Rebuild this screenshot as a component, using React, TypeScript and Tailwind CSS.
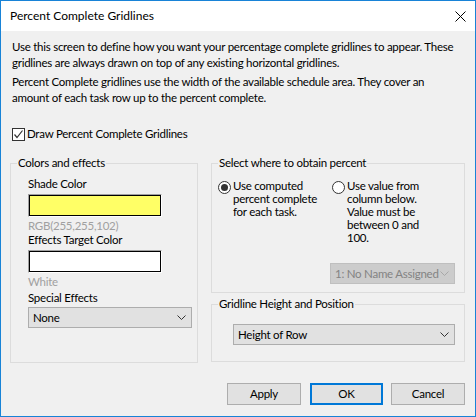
import React from 'react';

function Chevron({ color = '#333' }: { color?: string }) {
  return (
    <svg width="9" height="5" viewBox="0 0 9 5" className="shrink-0">
      <path d="M0.5 0.5 L4.5 4.5 L8.5 0.5" fill="none" stroke={color} strokeWidth="1" />
    </svg>
  );
}

function Combo({ value, className, disabled }: { value: string; className: string; disabled?: boolean }) {
  return (
    <div
      className={`flex items-center justify-between pl-[4px] pr-[5px] border whitespace-nowrap ${
        disabled ? 'bg-[#cccccc] border-[#bfbfbf] text-[#838383]' : 'bg-[#e1e1e1] border-[#adadad] text-black'
      } ${className}`}
    >
      <span>{value}</span>
      <Chevron color={disabled ? '#a8a8a8' : '#333'} />
    </div>
  );
}

function ColorBox({ color }: { color: string }) {
  return (
    <div className="w-[134px] h-[23px] border border-t-[#a0a0a0] border-l-[#a0a0a0] border-b-white border-r-white">
      <div className="w-full h-full border border-black" style={{ backgroundColor: color }} />
    </div>
  );
}

function Radio({ checked }: { checked?: boolean }) {
  return (
    <span className="mt-[2px] w-[13px] h-[13px] shrink-0 rounded-full border border-[#333] bg-white flex items-center justify-center">
      {checked && <span className="w-[7px] h-[7px] rounded-full bg-[#333]" />}
    </span>
  );
}

function Button({ label, primary, className }: { label: string; primary?: boolean; className: string }) {
  return (
    <button
      className={`h-[22px] bg-[#e1e1e1] flex items-center justify-center ${
        primary ? 'border-2 border-[#0078d7]' : 'border border-[#adadad]'
      } ${className}`}
    >
      {label}
    </button>
  );
}

export default function App() {
  return (
    <div className="w-[476px] h-[417px] overflow-hidden border border-[#1883d7] bg-[#f0f0f0] flex flex-col text-[11.5px] tracking-[-0.25px] leading-[16px] text-black font-['Lato',sans-serif] whitespace-nowrap">
      {/* title bar */}
      <div className="h-[30px] shrink-0 bg-white flex items-center justify-between pl-[9px] pr-[9px]">
        <span className="text-[12px] tracking-normal">Percent Complete Gridlines</span>
        <svg width="11" height="11" viewBox="0 0 11 11">
          <path d="M0.5 0.5 L10.5 10.5 M10.5 0.5 L0.5 10.5" stroke="#000" strokeWidth="1" />
        </svg>
      </div>

      <div className="flex flex-col pl-[11px] pt-[8px]">
        <p>
          Use this screen to define how you want your percentage complete gridlines to appear. These
          <br />
          gridlines are always drawn on top of any existing horizontal gridlines.
        </p>
        <p className="mt-[3px]">
          Percent Complete gridlines use the width of the available schedule area. They cover an
          <br />
          amount of each task row up to the percent complete.
        </p>

        <label className="mt-[20px] flex items-center">
          <span className="w-[13px] h-[13px] border border-[#333] bg-white flex items-center justify-center">
            <svg width="11" height="11" viewBox="0 0 11 11">
              <path d="M1.5 5.5 L4 8.5 L9.5 1.5" fill="none" stroke="#333" strokeWidth="1.2" />
            </svg>
          </span>
          <span className="ml-[2px]">Draw Percent Complete Gridlines</span>
        </label>

        <div className="-ml-[2px] mt-[14px] flex gap-[13px] leading-[14px]">
          {/* Colors and effects */}
          <fieldset className="w-[188px] h-[207px] border border-[#dcdcdc]">
            <legend className="ml-[6px] px-[1px]">Colors and effects</legend>
            <div className="pl-[17px] pt-[7px] flex flex-col">
              <span>Shade Color</span>
              <div className="mt-[3px]">
                <ColorBox color="#ffff66" />
              </div>
              <span className="mt-[2px] text-[#a0a0a0]">RGB(255,255,102)</span>
              <span>Effects Target Color</span>
              <div className="mt-[3px]">
                <ColorBox color="#ffffff" />
              </div>
              <span className="mt-[2px] text-[#a0a0a0]">White</span>
              <span className="mt-[2px]">Special Effects</span>
              <Combo value="None" className="mt-[2px] w-[164px] h-[21px]" />
            </div>
          </fieldset>

          <div className="flex flex-col gap-[4px]">
            {/* Select where to obtain percent */}
            <fieldset className="w-[254px] h-[137px] border border-[#dcdcdc]">
              <legend className="ml-[6px] px-[1px]">Select where to obtain percent</legend>
              <div className="pl-[6px] pt-[9px] flex flex-col leading-[13px]">
                <div className="flex">
                  <div className="w-[114px] flex items-start">
                    <Radio checked />
                    <span className="ml-[2px]">
                      Use computed
                      <br />
                      percent complete
                      <br />
                      for each task.
                    </span>
                  </div>
                  <div className="flex items-start">
                    <Radio />
                    <span className="ml-[2px]">
                      Use value from
                      <br />
                      column below.
                      <br />
                      Value must be
                      <br />
                      between 0 and
                      <br />
                      100.
                    </span>
                  </div>
                </div>
                <Combo
                  value="1: No Name Assigned"
                  disabled
                  className="mt-[19px] ml-[112px] w-[125px] h-[21px] leading-[14px]"
                />
              </div>
            </fieldset>

            {/* Gridline Height and Position */}
            <fieldset className="w-[254px] h-[65px] border border-[#dcdcdc]">
              <legend className="ml-[6px] px-[1px]">Gridline Height and Position</legend>
              <div className="pl-[21px] pt-[13px]">
                <Combo value="Height of Row" className="w-[222px] h-[21px]" />
              </div>
            </fieldset>
          </div>
        </div>

        <div className="mt-[20px] flex">
          <Button label="Apply" className="ml-[215px] w-[74px]" />
          <Button label="OK" primary className="ml-[9px] w-[73px]" />
          <Button label="Cancel" className="ml-[8px] w-[74px]" />
        </div>
      </div>
    </div>
  );
}
